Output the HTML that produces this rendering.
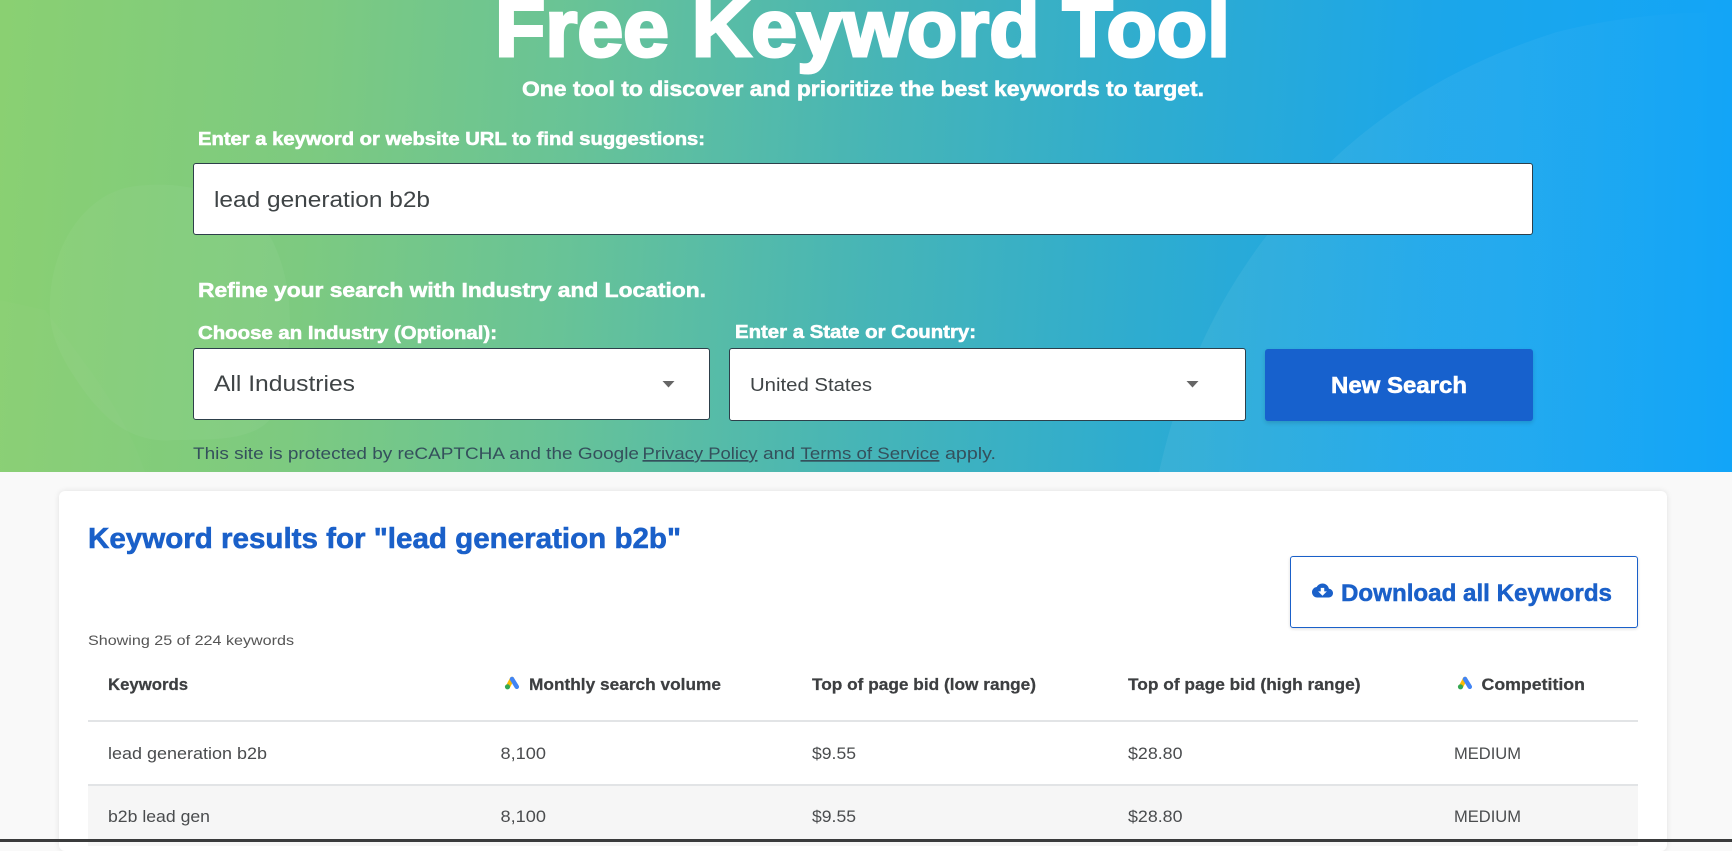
<!DOCTYPE html>
<html lang="en"><head><meta charset="utf-8"><title>Free Keyword Tool</title>
<style>
html,body{margin:0;padding:0;width:1732px;height:842px;overflow:hidden;background:#f9f9f9;font-family:"Liberation Sans",sans-serif}
.hero{position:absolute;left:0;top:0;width:1732px;height:472px;background:linear-gradient(94deg,#8ad072 0%,#7dca80 18%,#68c397 33%,#47b5b6 50%,#2eacd0 66%,#1ba6ea 82%,#12a5f8 100%)}
.box{position:absolute;background:#fff;border:1px solid #2d3f4a;border-radius:3px;box-sizing:border-box}
.btn{position:absolute;left:1265px;top:349px;width:268px;height:72px;background:#1761cd;border-radius:3px;box-shadow:0 2px 4px rgba(0,0,0,.14)}
.card{position:absolute;left:59px;top:491px;width:1608px;height:360px;background:#fff;border-radius:6px;box-shadow:0 0 6px rgba(0,0,0,.1)}
.dl{position:absolute;left:1290px;top:556px;width:348px;height:72px;box-sizing:border-box;border:1.5px solid #1a60c9;border-radius:3px;background:#fff;box-shadow:0 1px 3px rgba(0,0,0,.14)}
.ln{position:absolute;left:88px;width:1550px;height:2px;background:#e2e4e6}
.alt{position:absolute;left:88px;top:786px;width:1550px;height:60px;background:#f6f6f6}
.bar{position:absolute;left:0;top:839px;width:1732px;height:3px;background:#3a3b3c}
svg.o{position:absolute;left:0;top:0}
.h{font-weight:700;fill:#fff;stroke:#fff;stroke-width:.55px}
.t{fill:#3f4446}
.b{font-weight:700;fill:#3d3f41;stroke:#3d3f41;stroke-width:.25px}
.c{fill:#4a4c4e}
.r{fill:#34505c}
</style></head><body>
<div class="hero">
<svg width="1732" height="472" style="position:absolute;left:0;top:0">
<defs><linearGradient id="g" x1="0" x2="1" y1="0" y2="0"><stop offset="0" stop-color="#fff" stop-opacity=".06"/><stop offset=".6" stop-color="#fff" stop-opacity=".05"/><stop offset="1" stop-color="#fff" stop-opacity="0"/></linearGradient></defs>
<path d="M1159 472C1180 380 1215 300 1275 225C1330 150 1420 75 1557 32C1620 16 1680 12 1732 12V472Z" fill="url(#g)"/>
<path d="M50 300C52 245 85 195 130 187C185 178 245 195 272 240C292 280 296 330 280 400C270 440 225 440 175 440C125 445 95 410 70 370C55 345 48 325 50 300Z" fill="#fff" opacity=".04"/>
<path d="M45 310C75 350 125 410 145 472H0V300Z" fill="#fff" opacity=".02"/>
</svg>
</div>
<div class="box" style="left:193px;top:163px;width:1340px;height:72px"></div>
<div class="box" style="left:193px;top:348px;width:517px;height:72px"></div>
<div class="box" style="left:729px;top:348px;width:517px;height:73px"></div>
<div class="btn"></div>
<div class="card"></div>
<div class="dl"></div>
<div class="ln" style="top:720px"></div>
<div class="alt"></div>
<div class="ln" style="top:784px"></div>
<svg class="o" width="1732" height="842" font-family="'Liberation Sans',sans-serif">
<text class="h" x="495" y="56" font-size="81" textLength="735" lengthAdjust="spacingAndGlyphs" style="stroke-width:3px">Free Keyword Tool</text>
<text class="h" x="522" y="96" font-size="21" textLength="682" lengthAdjust="spacingAndGlyphs">One tool to discover and prioritize the best keywords to target.</text>
<text class="h" x="198" y="145" font-size="18" textLength="507" lengthAdjust="spacingAndGlyphs">Enter a keyword or website URL to find suggestions:</text>
<text class="t" x="214" y="207" font-size="22" textLength="216" lengthAdjust="spacingAndGlyphs">lead generation b2b</text>
<text class="h" x="198" y="297" font-size="20" textLength="508" lengthAdjust="spacingAndGlyphs">Refine your search with Industry and Location.</text>
<text class="h" x="198" y="339" font-size="18" textLength="299" lengthAdjust="spacingAndGlyphs">Choose an Industry (Optional):</text>
<text class="h" x="735" y="338" font-size="18" textLength="241" lengthAdjust="spacingAndGlyphs">Enter a State or Country:</text>
<text class="t" x="214" y="391" font-size="22" textLength="141" lengthAdjust="spacingAndGlyphs">All Industries</text>
<text class="t" x="750" y="391" font-size="18" textLength="122" lengthAdjust="spacingAndGlyphs">United States</text>
<path d="M662.500 381H674.500L668.500 387.500Z" fill="#666"/>
<path d="M1186.500 381H1198.500L1192.500 387.500Z" fill="#666"/>
<text class="h" x="1331" y="393" font-size="23" textLength="136" lengthAdjust="spacingAndGlyphs">New Search</text>
<g font-size="17" class="r">
<text x="193" y="459" textLength="446" lengthAdjust="spacingAndGlyphs">This site is protected by reCAPTCHA and the Google</text>
<text x="642.500" y="459" textLength="115" lengthAdjust="spacingAndGlyphs" text-decoration="underline">Privacy Policy</text>
<text x="763" y="459" textLength="32" lengthAdjust="spacingAndGlyphs">and</text>
<text x="800.500" y="459" textLength="139" lengthAdjust="spacingAndGlyphs" text-decoration="underline">Terms of Service</text>
<text x="945" y="459" textLength="51" lengthAdjust="spacingAndGlyphs">apply.</text>
</g>
<text x="88" y="548" font-size="29" font-weight="700" fill="#1a60c9" stroke="#1a60c9" stroke-width=".6" textLength="593" lengthAdjust="spacingAndGlyphs">Keyword results for "lead generation b2b"</text>
<svg x="1312" y="580" width="21" height="21" viewBox="0 0 24 24"><path fill="#1a60c9" d="M19.35 10.040C18.670 6.590 15.640 4 12 4 9.110 4 6.600 5.640 5.350 8.040 2.340 8.360 0 10.910 0 14c0 3.310 2.690 6 6 6h13c2.760 0 5-2.240 5-5 0-2.640-2.050-4.780-4.650-4.960zM17 13l-5 5-5-5h3V9h4v4h3z"/></svg>
<text x="1341" y="601" font-size="24" font-weight="700" fill="#1a60c9" stroke="#1a60c9" stroke-width=".5" textLength="271" lengthAdjust="spacingAndGlyphs">Download all Keywords</text>
<text x="88" y="645" font-size="13.500" fill="#555" textLength="206" lengthAdjust="spacingAndGlyphs">Showing 25 of 224 keywords</text>
<g font-size="16.500">
<text class="b" x="108" y="690" textLength="80" lengthAdjust="spacingAndGlyphs">Keywords</text>
<text class="b" x="529" y="690" textLength="192" lengthAdjust="spacingAndGlyphs">Monthly search volume</text>
<text class="b" x="812" y="690" textLength="224" lengthAdjust="spacingAndGlyphs">Top of page bid (low range)</text>
<text class="b" x="1128" y="690" textLength="232.500" lengthAdjust="spacingAndGlyphs">Top of page bid (high range)</text>
<text class="b" x="1481.500" y="690" textLength="103.500" lengthAdjust="spacingAndGlyphs">Competition</text>
</g>
<g><path d="M512 679L508 686.500" stroke="#fbbc04" stroke-width="4.500" stroke-linecap="round"/><path d="M512 679L516.800 686.800" stroke="#4285f4" stroke-width="4.500" stroke-linecap="round"/><circle cx="507.500" cy="686.800" r="2.600" fill="#34a853"/></g>
<g transform="translate(953 0)"><path d="M512 679L508 686.500" stroke="#fbbc04" stroke-width="4.500" stroke-linecap="round"/><path d="M512 679L516.800 686.800" stroke="#4285f4" stroke-width="4.500" stroke-linecap="round"/><circle cx="507.500" cy="686.800" r="2.600" fill="#34a853"/></g>
<g font-size="17">
<text class="c" x="108" y="759" textLength="159" lengthAdjust="spacingAndGlyphs">lead generation b2b</text>
<text class="c" x="500.500" y="759" textLength="45.500" lengthAdjust="spacingAndGlyphs">8,100</text>
<text class="c" x="812" y="759" textLength="44" lengthAdjust="spacingAndGlyphs">$9.55</text>
<text class="c" x="1128" y="759" textLength="54.500" lengthAdjust="spacingAndGlyphs">$28.80</text>
<text class="c" x="1454" y="759" textLength="67" lengthAdjust="spacingAndGlyphs">MEDIUM</text>
<text class="c" x="108" y="822" textLength="102" lengthAdjust="spacingAndGlyphs">b2b lead gen</text>
<text class="c" x="500.500" y="822" textLength="45.500" lengthAdjust="spacingAndGlyphs">8,100</text>
<text class="c" x="812" y="822" textLength="44" lengthAdjust="spacingAndGlyphs">$9.55</text>
<text class="c" x="1128" y="822" textLength="54.500" lengthAdjust="spacingAndGlyphs">$28.80</text>
<text class="c" x="1454" y="822" textLength="67" lengthAdjust="spacingAndGlyphs">MEDIUM</text>
</g>
</svg>
<div class="bar"></div>
</body></html>
